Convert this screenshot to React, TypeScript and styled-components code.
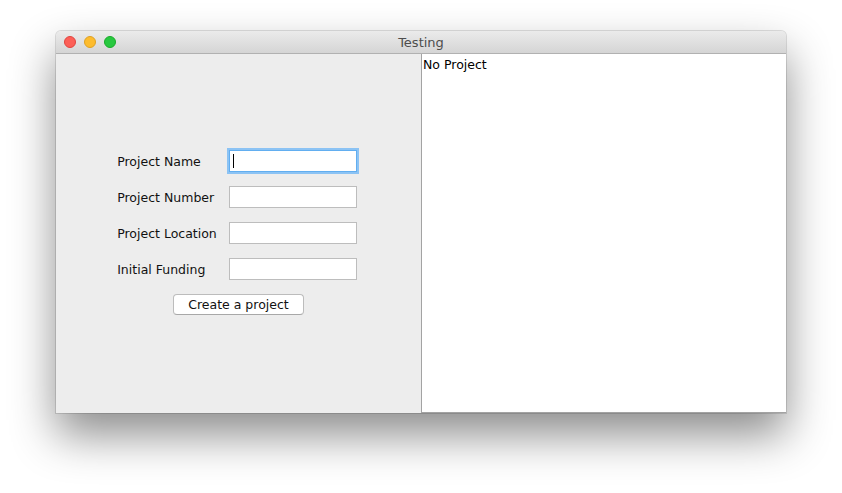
import styled, { createGlobalStyle } from "styled-components";

const GlobalStyle = createGlobalStyle`
  html, body {
    margin: 0;
    padding: 0;
    background: #ffffff;
  }
  body {
    font-family: "DejaVu Sans", "Liberation Sans", sans-serif;
  }
`;

const Page = styled.div`
  width: 842px;
  height: 493px;
  padding: 31px 0 0 56px;
  box-sizing: border-box;
  overflow: hidden;
`;

const Window = styled.div`
  width: 730px;
  height: 382px;
  display: flex;
  flex-direction: column;
  border-radius: 5px 5px 0 0;
  background: #ededed;
  box-shadow: 0 0 0 1px rgba(0, 0, 0, 0.12), 0 22px 45px rgba(0, 0, 0, 0.45);
  overflow: hidden;
`;

const TitleBar = styled.div`
  position: relative;
  height: 22px;
  flex-shrink: 0;
  display: flex;
  align-items: center;
  justify-content: center;
  background: linear-gradient(#ebebeb, #d5d5d5);
  border-bottom: 1px solid #b1b1b1;
`;

const Lights = styled.div`
  position: absolute;
  left: 8px;
  top: 5px;
  display: flex;
  gap: 8px;
`;

const Light = styled.span<{ $fill: string; $edge: string }>`
  width: 12px;
  height: 12px;
  border-radius: 50%;
  box-sizing: border-box;
  background: ${(p) => p.$fill};
  border: 1px solid ${(p) => p.$edge};
`;

const Title = styled.span`
  font-size: 13px;
  color: #4d4d4d;
`;

const Body = styled.div`
  flex: 1;
  display: flex;
  min-height: 0;
`;

const FormPane = styled.div`
  width: 365px;
  padding: 0 3px 2px 0;
  box-sizing: border-box;
  display: flex;
  align-items: center;
  justify-content: center;
  background: #ededed;
`;

const FormGrid = styled.div`
  display: grid;
  grid-template-columns: auto 128px;
  column-gap: 12px;
  row-gap: 14px;
  align-items: center;
`;

const Label = styled.label`
  font-size: 12.5px;
  color: #111;
`;

const Field = styled.div<{ $focused?: boolean }>`
  height: 22px;
  box-sizing: border-box;
  background: #ffffff;
  border: 1px solid ${(p) => (p.$focused ? "#62aef0" : "#bdbdbd")};
  box-shadow: ${(p) => (p.$focused ? "0 0 0 2px #8cc3f4" : "none")};
  display: flex;
  align-items: center;
  padding-left: 3px;
`;

const Caret = styled.span`
  width: 1px;
  height: 14px;
  background: #000;
`;

const ButtonRow = styled.div`
  grid-column: 1 / span 2;
  display: flex;
  justify-content: center;
  padding-left: 3px;
`;

const Button = styled.button`
  width: 131px;
  height: 21px;
  padding: 0;
  font-family: inherit;
  font-size: 12.5px;
  color: #111;
  background: #ffffff;
  border: 1px solid #bcbcbc;
  border-bottom-color: #a8a8a8;
  border-radius: 4px;
`;

const OutputPane = styled.div`
  flex: 1;
  background: #ffffff;
  border: 1px solid #a3a3a3;
  border-right: none;
  border-top: none;
  padding: 3px 1px;
  font-size: 12.5px;
  color: #000;
`;

const labels = ["Project Name", "Project Number", "Project Location", "Initial Funding"];

export default function App() {
  return (
    <>
      <GlobalStyle />
      <Page>
        <Window>
          <TitleBar>
            <Lights>
              <Light $fill="#fc5f57" $edge="#e0443e" />
              <Light $fill="#fdbc2e" $edge="#dea123" />
              <Light $fill="#28c840" $edge="#1aab29" />
            </Lights>
            <Title>Testing</Title>
          </TitleBar>
          <Body>
            <FormPane>
              <FormGrid>
                {labels.map((l, i) => (
                  <>
                    <Label key={l}>{l}</Label>
                    <Field key={l + "-f"} $focused={i === 0}>
                      {i === 0 && <Caret />}
                    </Field>
                  </>
                ))}
                <ButtonRow>
                  <Button>Create a project</Button>
                </ButtonRow>
              </FormGrid>
            </FormPane>
            <OutputPane>No Project</OutputPane>
          </Body>
        </Window>
      </Page>
    </>
  );
}
